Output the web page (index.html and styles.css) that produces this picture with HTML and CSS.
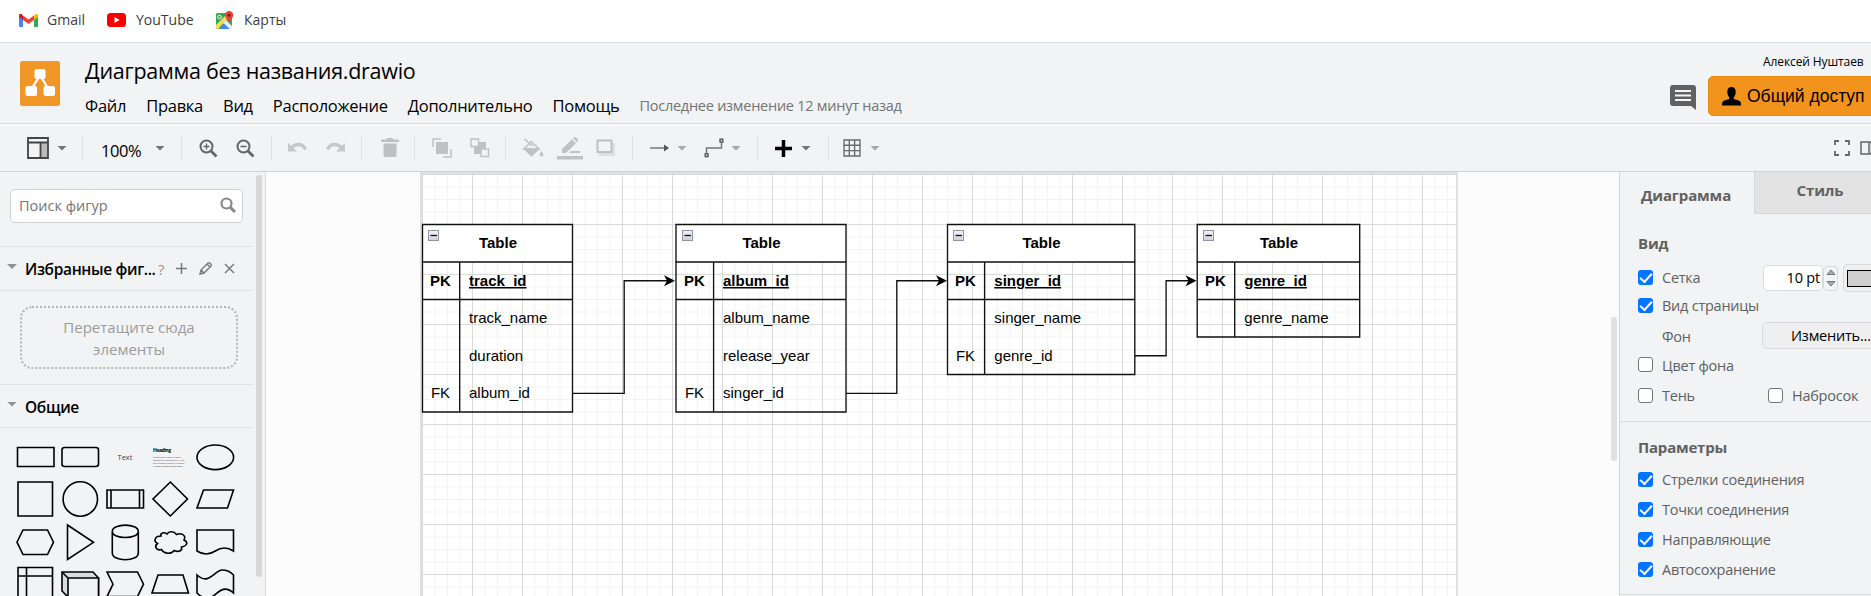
FILE: index.html
```html
<!DOCTYPE html>
<html lang="ru">
<head>
<meta charset="utf-8">
<title>Диаграмма без названия.drawio</title>
<link rel="stylesheet" href="styles.css">
</head>
<body>
<nav class="bookmarks">
  <a class="bookmark gmail"><svg width="19" height="14" viewBox="0 0 19 14"><path fill="#4285f4" d="M0 2v11q0 1 1 1h3V6z"/><path fill="#34a853" d="M19 2v11q0 1-1 1h-3V6z"/><path fill="#fbbc04" d="M15 2.5Q17-.5 19 1.500V4l-4 3z"/><path fill="#c5221f" d="M4 2.500Q2-.5 0 1.500V4l4 3z"/><path fill="#ea4335" d="M4 2.500l5.500 4L15 2.500V7l-5.500 4L4 7z"/></svg><span>Gmail</span></a>
  <a class="bookmark youtube"><svg width="19" height="14" viewBox="0 0 19 14"><rect width="19" height="14" rx="3.500" fill="#f00"/><path d="M7.500 4v6l5-3z" fill="#fff"/></svg><span>YouTube</span></a>
  <a class="bookmark maps"><svg width="19" height="19" viewBox="0 0 19 19"><rect x="1" y="2" width="16" height="16" rx="1.500" fill="#34a853"/><path fill="#fbd75b" d="M1 14L12 3l3 2L3 18H1z"/><path fill="#e8eaed" d="M11 9l6 6v3h-3L8 12z"/><path fill="#4285f4" d="M4 18l5-5.500 5.500 5.500z"/><circle cx="4.500" cy="6" r="1.800" fill="none" stroke="#fff"/><path fill="#ea4335" d="M14 0a4 4 0 0 1 4.200 4.200C18.200 7 15 8 14 12.500 13 8 10 7 10 4.200A4 4 0 0 1 14 0z"/><circle cx="14" cy="4.300" r="1.500" fill="#8b1a12"/></svg><span>Карты</span></a>
</nav>

<header class="header">
  <svg class="logo" width="40" height="45" viewBox="0 0 40 45"><rect width="40" height="45" rx="2.500" fill="#f19728"/><path d="M20 14L11 29M20 14l9 15" stroke="#fff" stroke-width="2.200"/><g fill="#fff"><rect x="14.500" y="8" width="11" height="10" rx="2"/><rect x="5.500" y="25" width="11.500" height="10" rx="2"/><rect x="23.500" y="25" width="11.500" height="10" rx="2"/></g></svg>
  <div class="heading">
    <div class="title">Диаграмма без названия.drawio</div>
    <div class="menu"><span>Файл</span><span>Правка</span><span>Вид</span><span>Расположение</span><span>Дополнительно</span><span>Помощь</span><span class="status">Последнее изменение 12 минут назад</span></div>
  </div>
  <div class="account">
    <div class="user"><span>Алексей Нуштаев</span><svg width="9" height="5" viewBox="0 0 9 5"><path d="M0 0h9L4.500 5z" fill="#999"/></svg></div>
    <div class="actions">
      <svg width="26" height="26" viewBox="0 0 26 26"><path fill="#616161" d="M3 0h20q3 0 3 3v22l-5-4H3q-3 0-3-3V3q0-3 3-3z"/><path d="M5 6h16M5 10.500h16M5 15h16" stroke="#f5f5f5" stroke-width="2.200"/></svg>
      <div class="share"><svg width="19" height="19" viewBox="0 0 19 19"><path d="M9.500 0c3 0 4.300 2 4.200 5 0 2.500-1 4.300-2 5.500v1.500l5 1.500q2.300.8 2.300 3v2H0v-2q0-2.200 2.300-3l5-1.500v-1.500c-1-1.200-2-3-2-5.500C5.200 2 6.500 0 9.500 0z"/></svg><span>Общий доступ</span></div>
    </div>
  </div>
</header>

<div class="toolbar">
  <div class="group view"><svg width="22" height="22" viewBox="0 0 22 22"><rect x="14" y="6" width="7" height="15" fill="#bbb"/><path d="M1 1h20v20H1zM1 5.500h20M13.500 5.500V21" fill="none" stroke="#444" stroke-width="1.800"/></svg><i class="caret"></i></div>
  <div class="group zoom"><span>100%</span><i class="caret"></i></div>
  <div class="group pair"><svg width="19" height="19" viewBox="0 0 19 19"><g fill="none" stroke="#666"><circle cx="7.500" cy="7.500" r="6" stroke-width="2"/><path d="M11.500 11.500l6 6" stroke-width="2.800"/><path d="M4.500 7.500h6M7.500 4.500v6" stroke-width="1.400"/></g></svg><svg width="19" height="19" viewBox="0 0 19 19"><g fill="none" stroke="#666"><circle cx="7.500" cy="7.500" r="6" stroke-width="2"/><path d="M11.500 11.500l6 6" stroke-width="2.800"/><path d="M4.500 7.500h6" stroke-width="1.600"/></g></svg></div>
  <div class="group history"><svg width="19" height="12" viewBox="0 0 19 12"><path fill="#c6c7c8" d="M0 1l3 2.800C8-.8 16-.3 19 7l-3 1C14 3.500 9 3 5.500 6.200L9 9.500H0z"/></svg><svg width="19" height="12" viewBox="0 0 19 12"><path fill="#c6c7c8" d="M19 1l-3 2.800C11-.8 3-.3 0 7l3 1c2-4.500 7-5 10.500-1.800L10 9.500h9z"/></svg></div>
  <div class="group delete"><svg width="18" height="20" viewBox="0 0 18 20"><path fill="#bfc0c1" d="M0 1.500h5.500L6.500 0h5l1 1.500H18V4H0zM2.500 5.500h13V17q0 2-2 2h-9q-2 0-2-2z"/></svg></div>
  <div class="group order"><svg width="20" height="20" viewBox="0 0 20 20"><rect x="4" y="4" width="12" height="12" fill="#c0c1c2"/><path d="M9 1H1v8M19 11v8h-8" fill="none" stroke="#c0c1c2" stroke-width="1.500"/></svg><svg width="20" height="20" viewBox="0 0 20 20"><rect x="4" y="4" width="12" height="12" fill="#c0c1c2"/><g fill="#f1f3f4" stroke="#c0c1c2" stroke-width="1.500"><rect x="1" y="1" width="7.500" height="7.500"/><rect x="11" y="11" width="7.500" height="7.500"/></g></svg></div>
  <div class="group format"><svg width="22" height="21" viewBox="0 0 22 21"><path fill="none" stroke="#c0c1c2" stroke-width="1.600" d="M2.500 1l8 7M10 3L2 11h15L9.500 4"/><path fill="#c0c1c2" d="M1 10.500h17L9.500 19z"/><path fill="#c0c1c2" d="M19.500 13q4 5 0 5.500-4-.5 0-5.500z"/></svg><svg width="26" height="23" viewBox="0 0 26 23"><path fill="#c0c1c2" d="M5 12L15 2.200l4 4L9 16H5zM16 1.200q2-2 3.500-.5l1 1q1.500 1.500-.5 3.300zM12 16l2-2h9v2zM0 19h26v3.500H0z"/></svg><svg width="20" height="18" viewBox="0 0 20 18"><path fill="#dcdedf" d="M3 14h13V4h3v13H3z"/><rect x="1.500" y="1.500" width="14" height="11.500" fill="#f1f3f4" stroke="#bebfc0" stroke-width="2"/></svg></div>
  <div class="group lines"><svg width="20" height="10" viewBox="0 0 20 10"><path d="M0 5h15" stroke="#777" stroke-width="1.500"/><path d="M14 1.500L19 5l-5 3.500z" fill="#555"/></svg><i class="caret light"></i><svg class="waypoint" width="20" height="20" viewBox="0 0 20 20"><path d="M2.500 16v-6h15V4" fill="none" stroke="#777" stroke-width="1.500"/><g fill="#fff" stroke="#555" stroke-width="1.400"><rect x="1.200" y="15.800" width="2.800" height="2.800"/><rect x="16" y="1.200" width="2.800" height="2.800"/></g></svg><i class="caret light"></i></div>
  <div class="group insert"><svg width="17" height="17" viewBox="0 0 17 17"><path d="M8.500 0v17M0 8.500h17" stroke="#000" stroke-width="3.500"/></svg><i class="caret"></i></div>
  <div class="group table-menu"><svg width="18" height="18" viewBox="0 0 18 18"><path fill="none" stroke="#6b6b6b" stroke-width="1.400" d="M1 1h16v16H1zM1 6.300h16M1 11.600h16M6.300 1v16M11.600 1v16"/></svg><i class="caret light"></i></div>
  <div class="group window"><svg width="16" height="16" viewBox="0 0 16 16"><path fill="none" stroke="#666" stroke-width="1.800" d="M5 1H1v4M11 1h4v4M15 11v4h-4M5 15H1v-4"/></svg><svg width="20" height="14" viewBox="0 0 20 14"><path fill="#ccc" d="M10 1h9v12h-9z"/><path fill="none" stroke="#666" stroke-width="1.500" d="M1 1h18v12H1zM9 1v12"/></svg></div>
</div>

<main class="workspace">
  <aside class="sidebar">
    <div class="shapes-panel">
      <div class="search"><span>Поиск фигур</span><svg width="16" height="16" viewBox="0 0 16 16"><circle cx="6.500" cy="6.500" r="5" fill="none" stroke="#888" stroke-width="2.200"/><path d="M10 10l5 5" stroke="#888" stroke-width="3"/></svg></div>
      <div class="section favorites"><i class="caret"></i><span class="name">Избранные фиг...</span><span class="help">?</span><svg width="11" height="11" viewBox="0 0 11 11"><path d="M5.500 0v11M0 5.500h11" stroke="#777" stroke-width="1.500"/></svg><svg width="13" height="13" viewBox="0 0 13 13"><path fill="none" stroke="#777" stroke-width="1.400" d="M1 12l1-4 7-7q1-.6 2 .3l.7.7q1 1 .3 2l-7 7zM8 2l3 3M2 8l3 3"/></svg><svg width="11" height="11" viewBox="0 0 11 11"><path d="M1 1l9 9M10 1l-9 9" stroke="#777" stroke-width="1.400"/></svg></div>
      <div class="drop-area"><div class="drop">Перетащите сюда<br>элементы</div></div>
      <div class="section general"><i class="caret"></i><span class="name">Общие</span></div>
      <div class="shapes">
        <svg viewBox="0 0 45 42.500"><path d="M4.500 11.500h36.500v19H4.500z"/></svg>
        <svg viewBox="0 0 45 42.500"><rect x="4" y="11.500" width="36.500" height="19" rx="2.500"/></svg>
        <svg viewBox="0 0 45 42.500"><text x="22" y="23.500" class="t-text">Text</text></svg>
        <svg viewBox="0 0 45 42.500"><text x="5" y="15.500" class="t-head" textLength="18">Heading</text><g class="t-body"><text x="5" y="22" textLength="28">Lorem ipsum dolor sit amet,</text><text x="5" y="25" textLength="31">consectetur adipisicing elit, sed</text><text x="5" y="28" textLength="32">do eiusmod tempor incididunt</text><text x="5" y="31" textLength="30">ut labore et dolore magna aliqua.</text></g></svg>
        <svg viewBox="0 0 45 42.500"><ellipse cx="22.300" cy="21.300" rx="18.300" ry="12.300"/></svg>
        <svg viewBox="0 0 45 42.500"><path d="M5 4h34.500v34H5z"/></svg>
        <svg viewBox="0 0 45 42.500"><circle cx="22.300" cy="21" r="17.200"/></svg>
        <svg viewBox="0 0 45 42.500"><path d="M4 12h36.500v18H4zM8 12v18M36.500 12v18"/></svg>
        <svg viewBox="0 0 45 42.500"><path d="M22.300 4l17.200 17-17.200 17L5 21z"/></svg>
        <svg viewBox="0 0 45 42.500"><path d="M10.500 12H40.500l-6 18H4z"/></svg>
        <svg viewBox="0 0 45 42.500"><path d="M10 9h24.500l6 12.200-6 12.300H10L4 21.200z"/></svg>
        <svg viewBox="0 0 45 42.500"><path d="M9.500 4l26 17.300-26 17.200z"/></svg>
        <svg viewBox="0 0 45 42.500"><path d="M9.300 10.500v21.500c0 9 26 9 26 0V10.500c0-8.500-26-8.500-26 0 0 8 26 8 26 0"/></svg>
        <svg viewBox="0 0 45 42.500"><path d="M13 15c-6 0-8 5-3.500 7.500-4 3-.5 7.500 4 6 3 4.800 10 4.800 12.700 1 4 2 8.500.5 7.300-3.500 7-1.500 6-5.500 2.500-7 3-5-3.500-7.500-7.500-5.500-3-4-8-3-9.500-.5C16 10.500 12 12 13 15z"/></svg>
        <svg viewBox="0 0 45 42.500"><path d="M4 9h36.500v21q-9-6-18.200 0T4 30z"/></svg>
        <svg viewBox="0 0 45 42.500"><path d="M5 4.500h34.500v34H5zM5 13h34.500M13.500 4.500v34"/></svg>
        <svg viewBox="0 0 45 42.500"><path fill="#dadcdd" d="M4 9h31l5.500 6v19H10L4 28z"/><path class="face" d="M40.500 15H10v19h30.500zM4 9l6 6"/></svg>
        <svg viewBox="0 0 45 42.500"><path d="M4 9h30.500l6 12.200-6 12.300H4l6-12.300z"/></svg>
        <svg viewBox="0 0 45 42.500"><path d="M10 12h25l5.500 18H4z"/></svg>
        <svg viewBox="0 0 45 42.500"><path d="M4 12c12 11 18-5 25-5s11.500 5 11.500 5v18c-12-11-18 5-25 5S4 30 4 30z"/></svg>
      </div>
    </div>
    <div class="scroll-thumb"></div>
  </aside>

  <section class="canvas">
    <svg class="diagram" width="1345" height="424" viewBox="266 172 1345 424">
      <defs>
        <pattern id="grid" x="422" y="174" width="50" height="50" patternUnits="userSpaceOnUse"><path d="M13 0v50M25.500 0v50M38 0v50M0 13h50M0 25.500h50M0 38h50" stroke="#f3f3f3"/><path d="M.5 0v50M0 .5h50" stroke="#d9d9d9"/></pattern>
        <linearGradient id="fold" x1="0" y1="0" x2="0" y2="1"><stop stop-color="#f4f4f8"/><stop offset="1" stop-color="#cfcfd6"/></linearGradient>
        <g id="toggle"><rect x="6" y="6" width="10" height="10" fill="url(#fold)" stroke="#8f94aa"/><path d="M8 11h6.500" stroke="#111" stroke-width="1.300"/></g>
        <path id="head" d="M0 0l-11 5.500 3-5.500-3-5.500z"/>
      </defs>
      <rect x="421" y="173" width="1036" height="430" fill="#fff" stroke="#e0e0e0" stroke-width="2"/>
      <rect x="422" y="174" width="1034" height="430" fill="url(#grid)"/>
      <g class="outline">
        <path d="M422.500 262v-37.500h150V262" fill="#fff"/><path d="M422.500 262v150h150V262zM422.500 299.500h150M459.700 262v150"/>
        <path d="M676 262v-37.500h170V262" fill="#fff"/><path d="M676 262v150h170V262zM676 299.500h170M713.600 262v150"/>
        <path d="M947.500 262v-37.500h187.300V262" fill="#fff"/><path d="M947.500 262v112.500h187.300V262zM947.500 299.500h187.300M984.600 262v112.500"/>
        <path d="M1197.200 262v-37.500h162.500V262" fill="#fff"/><path d="M1197.200 262v75h162.500V262zM1197.200 299.500h162.500M1234.700 262v75"/>
        <path d="M572.500 393.300h51.700V280.700H668M846 393.300h50.800V280.700H940M1134.800 355.700h31.300V280.700H1189"/>
      </g>
      <use href="#head" x="675" y="280.700"/><use href="#head" x="947" y="280.700"/><use href="#head" x="1196.500" y="280.700"/>
      <use href="#toggle" x="422.500" y="224.500"/><use href="#toggle" x="676.500" y="224.500"/><use href="#toggle" x="947.500" y="224.500"/><use href="#toggle" x="1197.500" y="224.500"/>
      <g class="cells bold center"><text x="498" y="248">Table</text><text x="761.500" y="248">Table</text><text x="1041.500" y="248">Table</text><text x="1279" y="248">Table</text><text x="440.500" y="286">PK</text><text x="694.500" y="286">PK</text><text x="965.500" y="286">PK</text><text x="1215.500" y="286">PK</text></g>
      <g class="cells center"><text x="440.500" y="398">FK</text><text x="694.500" y="398">FK</text><text x="965.500" y="361">FK</text></g>
      <g class="cells bold key"><text x="469" y="286">track_id</text><text x="723" y="286">album_id</text><text x="994.300" y="286">singer_id</text><text x="1244.300" y="286">genre_id</text></g>
      <g class="cells"><text x="469" y="323">track_name</text><text x="469" y="361">duration</text><text x="469" y="398">album_id</text><text x="723" y="323">album_name</text><text x="723" y="361">release_year</text><text x="723" y="398">singer_id</text><text x="994.300" y="323">singer_name</text><text x="994.300" y="361">genre_id</text><text x="1244.300" y="323">genre_name</text></g>
    </svg>
    <div class="canvas-thumb"></div>
  </section>

  <aside class="inspector">
    <div class="tabs"><div class="tab active">Диаграмма</div><div class="tab">Стиль</div></div>
    <div class="options view-options">
      <h3>Вид</h3>
      <div class="row"><i class="check on"></i><span class="label wide">Сетка</span><span class="size">10 pt</span><span class="spinner"><svg width="10" height="6" viewBox="0 0 10 6"><path d="M1 5.500L5 1l4 4.500z"/></svg><svg width="10" height="6" viewBox="0 0 10 6"><path d="M1 .5L5 5 9 .5z"/></svg></span><span class="color"><i></i></span></div>
      <div class="row"><i class="check on"></i><span class="label">Вид страницы</span></div>
      <div class="row background"><i class="blank"></i><span class="label wide">Фон</span><span class="change">Изменить...</span></div>
      <div class="row fill"><i class="check"></i><span class="label">Цвет фона</span></div>
      <div class="row shade"><i class="check"></i><span class="label wide">Тень</span><i class="check second"></i><span class="label">Набросок</span></div>
    </div>
    <div class="options params">
      <h3>Параметры</h3>
      <div class="row"><i class="check on"></i><span class="label">Стрелки соединения</span></div>
      <div class="row"><i class="check on"></i><span class="label">Точки соединения</span></div>
      <div class="row"><i class="check on"></i><span class="label">Направляющие</span></div>
      <div class="row"><i class="check on"></i><span class="label">Автосохранение</span></div>
    </div>
  </aside>
</main>
</body>
</html>
```
FILE: styles.css
```css
* { box-sizing: border-box; }
body { margin: 0; width: 1871px; height: 596px; overflow: hidden; display: flex; flex-direction: column; background: #f1f3f4; font-family: "Open Sans", "Noto Sans", sans-serif; color: #000; white-space: nowrap; }
svg { display: block; flex: none; }

.bookmarks { height: 43px; flex: none; display: flex; align-items: flex-start; background: #fff; border-bottom: 1px solid #dadce0; padding: 10px 0 0 19px; font-size: 14px; line-height: 20px; color: #3c4043; }
.bookmark { display: flex; align-items: center; gap: 9px; height: 20px; }
.gmail { width: 88px; }
.youtube { width: 108px; gap: 10px; }
.maps { gap: 10px; }

.header { height: 81px; flex: none; display: flex; border-bottom: 1px solid #d8dadd; padding-left: 20px; }
.logo { margin-top: 18px; }
.heading { margin-left: 25px; padding-top: 11px; flex: 1; }
.title { height: 34px; line-height: 34px; font-size: 21.500px; letter-spacing: -.28px; }
.menu { display: flex; gap: 20px; height: 34px; line-height: 34px; font-size: 16.500px; letter-spacing: -.27px; margin-top: 1px; }
.status { font-size: 14.500px; color: #747474; letter-spacing: -.25px; }
.account { width: 201px; flex: none; overflow: hidden; }
.user { display: flex; align-items: center; gap: 7px; height: 20px; margin: 8px 0 0 93px; font-size: 12px; letter-spacing: -.1px; }
.actions { display: flex; margin-top: 5px; }
.actions > svg { margin-top: 9px; }
.share { display: flex; align-items: center; gap: 6px; height: 40px; width: 190px; flex: none; margin-left: 12px; padding-left: 13px; background: #f2931e; border: 1px solid #ee8a0c; border-radius: 5px; font: 17.500px "Liberation Sans", sans-serif; }

.toolbar { height: 48px; flex: none; display: flex; border-top: 2px solid #fafbfc; border-bottom: 1px solid #cfd1d4; padding-bottom: 1px; }
.group { display: flex; align-items: center; position: relative; flex: none; }
.group:not(.table-menu):not(.window) { background: linear-gradient(#e0e1e3, #e0e1e3) right 9px / 1px 25px no-repeat; }
.caret { width: 10px; height: 5px; flex: none; background: #757575; clip-path: polygon(0 0, 100% 0, 50% 100%); }
.caret.light { background: #a5a7a8; }
.view { width: 83px; padding-left: 27px; gap: 8px; }
.zoom { width: 99px; padding-left: 18px; justify-content: space-between; padding-right: 17px; font-size: 16.500px; }
.zoom span { letter-spacing: -.4px; padding-top: 5px; }
.pair { width: 90px; padding-left: 17px; gap: 18px; }
.history { width: 90px; padding-left: 16px; gap: 19px; }
.delete { width: 53px; padding-left: 19px; }
.order { width: 91px; padding-left: 17px; gap: 18px; }
.format { width: 127px; padding-left: 16px; gap: 13px; }
.lines { width: 125px; padding-left: 17px; gap: 7px; }
.waypoint { margin-left: 10px; }
.insert { width: 71px; padding-left: 17px; gap: 9px; }
.table-menu { padding-left: 14px; gap: 9px; }
.window { margin-left: auto; width: 37px; gap: 10px; overflow: hidden; }

.workspace { flex: 1; display: flex; min-height: 0; overflow: hidden; }
.sidebar { width: 266px; flex: none; display: flex; gap: 3px; border-right: 1px solid #d9dade; }
.shapes-panel { width: 253px; padding-top: 17px; }
.scroll-thumb { width: 6px; height: 402px; margin-top: 3px; border-radius: 3px; background: #d7d8db; }
.search { width: 233px; height: 34px; margin-left: 10px; padding: 0 6px 2px 8px; display: flex; align-items: center; justify-content: space-between; background: #fff; border: 1px solid #d0d1d3; border-radius: 5px; font-size: 14.500px; color: #757575; }
.section { border: 1px solid #dfe1e3; border-width: 1px 0; display: flex; align-items: center; padding-left: 7px; font-size: 15.500px; font-weight: 600; letter-spacing: -.35px; }
.section .caret { background: #929292; margin: -4px 8px 0 0; }
.favorites { height: 45px; margin-top: 23px; }
.favorites .name { width: 132px; }
.favorites svg { margin-left: 12px; margin-top: -1px; }
.favorites .help + svg { margin-left: 10px; }
.help { color: #999; font-size: 15px; font-weight: 400; width: 8px; margin-left: 1px; }
.drop-area { height: 93px; padding: 15px 0 0 20px; }
.drop { width: 218px; height: 63px; border: 2px dotted #b5b6b8; border-radius: 12px; text-align: center; font-size: 15px; line-height: 22px; padding-top: 8px; color: #9c9c9c; }
.general { height: 44px; }
.general .name { padding-top: 2px; }
.shapes { display: grid; grid-template-columns: repeat(5, 45px); grid-auto-rows: 42.500px; margin: 7.500px 0 0 13px; }
.shapes svg { width: 45px; height: 42.500px; fill: none; stroke: #000; stroke-width: 1.600; }
.shapes .face { fill: #f1f3f4; }
.shapes text { stroke: none; fill: #444; }
.t-text { font-size: 7.500px; text-anchor: middle; }
.shapes .t-head { font-size: 5px; font-weight: 700; fill: #000; }
.t-body { font-size: 2.200px; }

.canvas { flex: 1; display: flex; background: #fbfbfb; min-width: 0; }
.outline { fill: none; stroke: #111; stroke-width: 1.350; }
.cells { font: 15px "Liberation Sans", Arial, sans-serif; }
.bold { font-weight: 700; }
.center { text-anchor: middle; }
.key { text-decoration: underline; }
.canvas-thumb { width: 6px; height: 144px; margin-top: 145px; border-radius: 3px; background: #e0e0e0; }

.inspector { width: 252px; flex: none; overflow: hidden; border-left: 1px solid #d2d4d8; color: #616161; font-size: 14.500px; }
.tabs { display: flex; height: 42px; font-size: 15px; font-weight: 700; letter-spacing: -.15px; }
.tab { width: 134px; flex: none; display: flex; align-items: center; justify-content: center; background: #e3e3e3; border: 1px solid #d5d7da; border-width: 0 0 1px 1px; padding-bottom: 5px; padding-right: 3px; }
.tab.active { background: none; border: 0; padding-bottom: 0; padding-top: 4px; padding-right: 2px; }
.options { padding-left: 18px; border-bottom: 1px solid #d8dadd; }
.options h3 { margin: 0; font-size: 15px; line-height: 24px; font-weight: 700; letter-spacing: -.2px; }
.view-options { padding-top: 17px; height: 208px; }
.view-options h3 { margin-bottom: 9px; }
.params { padding-top: 13px; height: 173px; }
.params h3 { margin-bottom: 6px; }
.row { display: flex; align-items: center; height: 28px; }
.params .row, .background { height: 30px; }
.fill { height: 31px; }
.shade { height: 30px; }
.label { margin-left: 9px; letter-spacing: -.25px; margin-top: -1px; flex: none; }
.label.wide { width: 91px; }
.background .label.wide { padding-top: 3px; }
.check { width: 15px; height: 15px; flex: none; border: 1.500px solid #767676; border-radius: 3px; background: #fff; margin-bottom: 2px; }
.check.on { border: 0; background: #0075ff; display: grid; place-items: center; }
.check.on::after { content: ""; width: 10px; height: 5px; border: solid #fff; border-width: 0 0 2.500px 2.500px; transform: translateY(-1px) rotate(-48deg); }
.check.second { margin-left: 15px; }
.blank { width: 15px; flex: none; }
.size { width: 60px; height: 26px; margin-left: 10px; flex: none; background: #fff; border: 1px solid #d8dadd; border-radius: 5px; text-align: right; padding-right: 2px; line-height: 24px; font-size: 14.500px; letter-spacing: -.2px; color: #000; }
.spinner { width: 15px; height: 25px; flex: none; border: 1px solid #d8dadd; border-radius: 4px; display: flex; flex-direction: column; align-items: center; justify-content: space-around; }
.spinner path { fill: #aaa; stroke: #777; }
.color { width: 60px; height: 28px; flex: none; margin-left: 5px; padding: 5px 3px; border: 1px solid #d8dadd; border-radius: 4px; background: #efefef; }
.color i { display: block; height: 17px; border: 1px solid #000; background: #d0d0d0; }
.change { width: 140px; height: 27px; flex: none; margin-left: 9px; padding-left: 28px; border: 1px solid #d8dadd; border-radius: 5px; background: #efefef; color: #000; line-height: 25px; letter-spacing: -.2px; }
```
